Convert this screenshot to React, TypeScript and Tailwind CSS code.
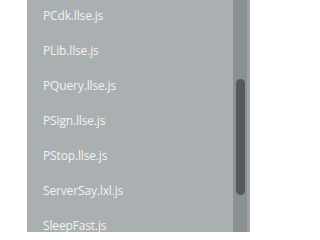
const files = [
  'PCdk.llse.js',
  'PLib.llse.js',
  'PQuery.llse.js',
  'PSign.llse.js',
  'PStop.llse.js',
  'ServerSay.lxl.js',
  'SleepFast.js',
];

export default function App() {
  return (
    <div className="h-[232px] w-[271px] bg-white overflow-hidden">
      <div className="ml-[27px] flex h-full w-[223px] bg-[#aaafb1]">
        <ul className="flex-1 pt-[8px] pl-[16px] font-['Open_Sans',sans-serif] text-[12px] leading-[16px] tracking-[-0.15px] text-[#f2f3f3]">
          {files.map((f) => (
            <li key={f} className="h-[35px]">
              {f}
            </li>
          ))}
        </ul>
        <div className="flex h-full w-[14px] justify-center bg-[#8b9092] pt-[79px]">
          <div className="h-[116px] w-[9px] rounded-full bg-[#55595c]" />
        </div>
        <div className="h-full w-[3px] bg-[#9fa4a6]" />
      </div>
    </div>
  );
}
